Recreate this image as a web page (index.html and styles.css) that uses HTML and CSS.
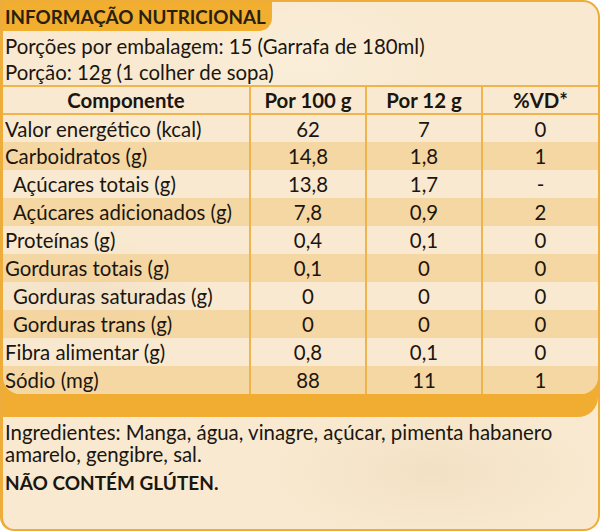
FILE: index.html
```html
<!DOCTYPE html>
<html lang="pt">
<head>
<meta charset="utf-8">
<title>Informação Nutricional</title>
<link rel="stylesheet" href="styles.css">
</head>
<body>
<div class="card">
  <div class="title">INFORMAÇÃO NUTRICIONAL</div>
  <div class="info">
    <div class="line">Porções por embalagem: 15 (Garrafa de 180ml)</div>
    <div class="line">Porção: 12g (1 colher de sopa)</div>
  </div>
  <div class="table-wrap">
    <div class="panel">
      <table class="nt">
        <colgroup>
          <col class="c1"><col class="c2"><col class="c3"><col class="c4">
        </colgroup>
        <thead>
          <tr><th>Componente</th><th>Por 100 g</th><th>Por 12 g</th><th>%VD*</th></tr>
        </thead>
        <tbody>
          <tr><td>Valor energético (kcal)</td><td>62</td><td>7</td><td>0</td></tr>
          <tr class="dk"><td>Carboidratos (g)</td><td>14,8</td><td>1,8</td><td>1</td></tr>
          <tr><td class="sub">Açúcares totais (g)</td><td>13,8</td><td>1,7</td><td>-</td></tr>
          <tr class="dk"><td class="sub">Açúcares adicionados (g)</td><td>7,8</td><td>0,9</td><td>2</td></tr>
          <tr><td>Proteínas (g)</td><td>0,4</td><td>0,1</td><td>0</td></tr>
          <tr class="dk"><td>Gorduras totais (g)</td><td>0,1</td><td>0</td><td>0</td></tr>
          <tr><td class="sub">Gorduras saturadas (g)</td><td>0</td><td>0</td><td>0</td></tr>
          <tr class="dk"><td class="sub">Gorduras trans (g)</td><td>0</td><td>0</td><td>0</td></tr>
          <tr><td>Fibra alimentar (g)</td><td>0,8</td><td>0,1</td><td>0</td></tr>
          <tr class="dk"><td>Sódio (mg)</td><td>88</td><td>11</td><td>1</td></tr>
        </tbody>
      </table>
    </div>
  </div>
  <div class="ingredients">
    <p class="ing">Ingredientes: Manga, água, vinagre, açúcar, pimenta habanero amarelo, gengibre, sal.</p>
    <p class="gluten">NÃO CONTÉM GLÚTEN.</p>
  </div>
</div>
</body>
</html>
```
FILE: styles.css
```css
html, body {
  margin: 0;
  padding: 0;
  background: #ffffff;
}

.card {
  box-sizing: border-box;
  width: 600px;
  height: 531px;
  border: 2px solid #eead3a;
  border-left-width: 3px;
  border-radius: 0 17px 16px 14px;
  overflow: hidden;
  background-color: #f8e9d0;
  background-image:
    radial-gradient(ellipse 120px 60px at 80px 300px, rgba(226, 200, 160, 0.25), transparent),
    radial-gradient(ellipse 160px 70px at 430px 470px, rgba(226, 200, 160, 0.25), transparent),
    radial-gradient(ellipse 140px 80px at 300px 60px, rgba(255, 248, 235, 0.35), transparent);
  font-family: Lato, "Open Sans", sans-serif;
  color: #1a1610;
  font-size: 20.4px;
  display: flex;
  flex-direction: column;
}

.title {
  align-self: flex-start;
  width: 269px;
  height: 29px;
  box-sizing: border-box;
  padding: 3px 0 0 2px;
  background: #f2ae2e;
  border-bottom-right-radius: 13px;
  font-weight: 700;
  font-size: 18.8px;
  line-height: 24px;
  color: #2a1f10;
  white-space: nowrap;
}

.info {
  padding: 2px 0 0 2px;
}

.line {
  line-height: 26px;
  white-space: nowrap;
}

.table-wrap {
  background: #f0ad32;
  padding-bottom: 23px;
  border-bottom-right-radius: 20px;
}

.panel {
  background-color: #f8e9d0;
  background-image:
    radial-gradient(ellipse 120px 60px at 80px 210px, rgba(226, 200, 160, 0.25), transparent);
  border-radius: 0 0 17px 17px;
  overflow: hidden;
}

.nt {
  width: 100%;
  border-collapse: collapse;
  table-layout: fixed;
}

.c1 { width: 247px; }
.c2 { width: 116px; }
.c3 { width: 116px; }
.c4 { width: auto; }

.nt th,
.nt td {
  height: 28px;
  box-sizing: border-box;
  padding: 0;
  line-height: 26px;
  text-align: center;
  border-left: 2px solid #efb54c;
  white-space: nowrap;
}

.nt th:first-child,
.nt td:first-child {
  border-left: none;
}

.nt td:first-child {
  text-align: left;
  padding-left: 2px;
}

.nt td.sub {
  padding-left: 10px;
}

.nt thead th {
  font-weight: 700;
  border-top: 2px solid #efb54c;
  border-bottom: 2px solid #efb54c;
}

.nt tr.dk {
  background: rgba(242, 201, 128, 0.55);
}

.ingredients {
  padding: 4px 0 0 2px;
}

.ing {
  margin: 0;
  line-height: 22px;
  width: 585px;
}

.gluten {
  margin: 6px 0 0;
  font-weight: 700;
  font-size: 19px;
  line-height: 24px;
}
```
